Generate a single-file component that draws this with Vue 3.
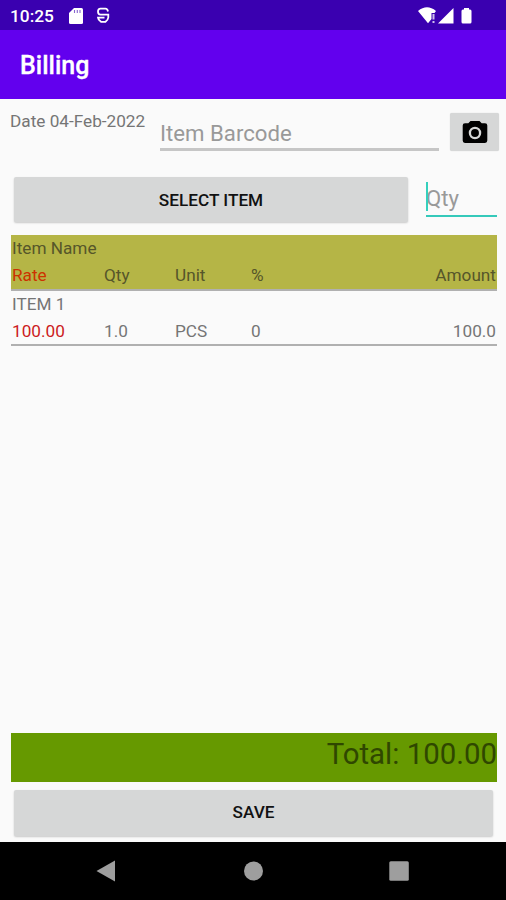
<script setup>
import { ref } from 'vue'

const items = ref([
  { name: 'ITEM 1', rate: '100.00', qty: '1.0', unit: 'PCS', percent: '0', amount: '100.0' }
])
const barcode = ref('')
const qty = ref('')
const total = ref('100.00')
</script>

<template>
  <div class="screen">
    <div class="status">
      <span class="clock">10:25</span>
      <svg class="sd" width="14" height="16" viewBox="0 0 14 16">
        <path d="M5 0H12.500Q14 0 14 1.500V14.500Q14 16 12.500 16H1.500Q0 16 0 14.500V5Z" fill="#fff" />
        <path d="M5.500 2v3M8.300 2v3M11 2v3" stroke="#3a00b0" stroke-width="1.100" opacity=".6" />
      </svg>
      <svg class="app-mark" width="14" height="17" viewBox="0 0 14 17" fill="none" stroke="#fff" stroke-width="1.800">
        <path d="M12 4.500Q11.500 1.700 9.500 1.700H4.500Q2 1.700 2 4.500Q2 7.700 4.500 7.700H12.300V10.500Q12 13 9.500 14.800H5Q2.200 13 2 10.600H8.500" />
      </svg>
      <svg class="radios" width="56" height="18" viewBox="0 0 56 18">
        <path d="M0 4Q9 -3.500 18 4L16.500 6H13.500V12L10 16.200Z" fill="#fff" />
        <path d="M14.500 7h2v5.500h-2zM14.500 14h2v2h-2z" fill="#fff" opacity=".75" />
        <path d="M35.500 1V16.500H20Z" fill="#fff" />
        <path d="M46 1h5v1.500h1q1.500 0 1.500 1.500v11q0 1.500-1.500 1.500h-7q-1.500 0-1.500-1.500V4q0-1.500 1.500-1.500h1z" fill="#fff" />
      </svg>
    </div>
    <header class="appbar"><h1>Billing</h1></header>

    <main class="content">
      <div class="scan-row">
        <span class="date">Date 04-Feb-2022</span>
        <input v-model="barcode" class="field barcode" placeholder="Item Barcode" />
        <button class="btn camera" aria-label="Scan">
          <svg width="26" height="24" viewBox="0 0 26 24">
            <path d="M8.500 1h9l2.200 2.300H23q2.300 0 2.300 2.300v15q0 2.400-2.300 2.400H3Q.7 23 .7 20.600v-15q0-2.300 2.300-2.300h3.300z" fill="#000" />
            <circle cx="13" cy="13" r="5.100" fill="none" stroke="#d6d7d7" stroke-width="2.300" />
          </svg>
        </button>
      </div>

      <div class="select-row">
        <button class="btn select">SELECT ITEM</button>
        <div class="qty-wrap">
          <input v-model="qty" class="field qty" placeholder="Qty" />
          <i class="caret"></i>
        </div>
      </div>

      <section class="list">
        <div class="entry head">
          <div class="name">Item Name</div>
          <div class="cells">
            <span class="rate">Rate</span><span>Qty</span><span>Unit</span><span>%</span><span class="amount">Amount</span>
          </div>
        </div>
        <div v-for="item in items" :key="item.name" class="entry">
          <div class="name">{{ item.name }}</div>
          <div class="cells">
            <span class="rate">{{ item.rate }}</span><span>{{ item.qty }}</span><span>{{ item.unit }}</span><span>{{ item.percent }}</span><span class="amount">{{ item.amount }}</span>
          </div>
        </div>
      </section>

      <div class="total">Total: {{ total }}</div>
      <button class="btn save">SAVE</button>
    </main>

    <nav class="navbar">
      <svg width="506" height="58" viewBox="0 0 506 58" fill="#9e9e9e">
        <path d="M96.500 29L115 18.500V39.500Z" />
        <circle cx="253.500" cy="29" r="9.500" />
        <rect x="389.300" y="19.300" width="19.500" height="19.500" rx="1.500" />
      </svg>
    </nav>
  </div>
</template>

<style>
body {
  margin: 0;
  background: #fafafa;
}
</style>

<style scoped>
.screen {
  width: 506px;
  height: 900px;
  display: flex;
  flex-direction: column;
  overflow: hidden;
  background: #fafafa;
  font-family: Roboto, "Liberation Sans", sans-serif;
  font-size: 17.2px;
  color: #757575;
}
.status {
  height: 30px;
  flex: none;
  box-sizing: border-box;
  display: flex;
  align-items: flex-start;
  padding: 7px 32px 0 10px;
  background: #3a00b0;
  color: #fff;
}
.clock {
  width: 59px;
  font-size: 17.3px;
  font-weight: 500;
  line-height: 19px;
}
.sd {
  margin-top: 1px;
}
.app-mark {
  margin-left: 13px;
}
.radios {
  margin-left: auto;
}
.appbar {
  height: 69px;
  flex: none;
  background: #6200ee;
  padding-left: 20px;
}
h1 {
  margin: 0;
  font-size: 25px;
  font-weight: 500;
  line-height: 72px;
  color: #fff;
  -webkit-text-stroke: 0.3px #fff;
}
.content {
  flex: 1;
  display: flex;
  flex-direction: column;
  padding: 0 9px 0 11px;
}
.scan-row {
  display: flex;
  height: 78px;
  flex: none;
}
.date {
  width: 150px;
  margin: 11px 0 0 -1px;
  line-height: 22px;
  white-space: nowrap;
}
.field {
  box-sizing: border-box;
  border: 0;
  border-bottom: 3px solid #c6c6c6;
  outline: 0;
  padding: 0;
  background: transparent;
  font: 22.2px Roboto, "Liberation Sans", sans-serif;
  color: #212121;
}
.field::placeholder {
  color: #999;
  opacity: 1;
}
.barcode {
  width: 279px;
  height: 34px;
  margin-top: 18px;
}
.btn {
  border: 0;
  padding: 0;
  border-radius: 2px;
  background: #d6d7d7;
  box-shadow: 0 1px 2px #0003;
  font: 500 17.2px Roboto, "Liberation Sans", sans-serif;
  color: #111;
}
.camera {
  width: 49px;
  height: 38px;
  margin: 14px -2px 0 11px;
  display: flex;
  align-items: center;
  justify-content: center;
  box-shadow: 0 0 1px #0003;
}
.select-row {
  display: flex;
  height: 58px;
  flex: none;
}
.select {
  width: 394px;
  height: 45px;
  margin-left: 3px;
}
.qty-wrap {
  position: relative;
  margin-left: 18px;
}
.qty {
  width: 71px;
  height: 40px;
  border-bottom: 2px solid #35c9ba;
  padding-top: 3px;
}
.caret {
  position: absolute;
  left: 0;
  top: 5px;
  width: 2px;
  height: 29px;
  background: #35d0bd;
}
.list {
  flex: 1;
}
.entry {
  height: 55px;
  box-sizing: border-box;
  border-bottom: 2px solid #b0b0b0;
  padding: 0 1px;
  line-height: 27px;
}
.head {
  background: #b5b546;
  color: #56562a;
  height: 56px;
}
.name {
  height: 27px;
}
.cells {
  display: grid;
  grid-template-columns: 92px 71px 76px 80px 1fr;
}
.rate {
  color: #cc1b22;
}
.head .rate {
  color: #cc3300;
}
.amount {
  text-align: right;
}
.total {
  height: 49px;
  flex: none;
  background: #669900;
  color: #2f4700;
  font-size: 29.4px;
  line-height: 42px;
  text-align: right;
}
.save {
  height: 46px;
  flex: none;
  margin: 8px 4px 6px 3px;
  padding-bottom: 2px;
}
.navbar {
  height: 58px;
  flex: none;
  background: #000;
}
.navbar svg {
  display: block;
}
</style>
